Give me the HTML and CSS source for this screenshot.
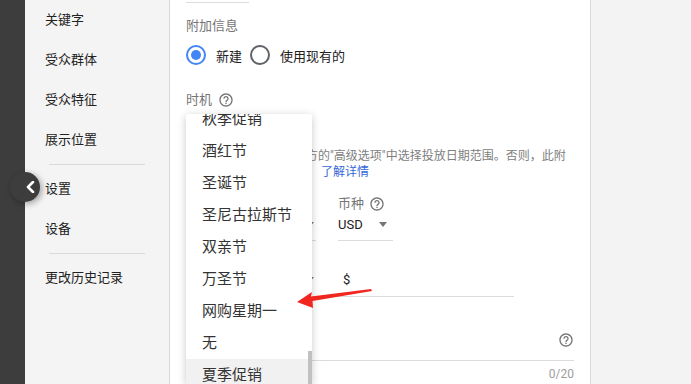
FILE: index.html
```html
<!DOCTYPE html>
<html lang="zh-CN">
<head>
    <meta charset="UTF-8">
    <meta name="viewport" content="width=device-width, initial-scale=1.0">
    <title>附加信息 - 设置</title>
    <link rel="stylesheet" href="styles.css">
</head>
<body>
    <div class="rail"></div>

    <nav class="side">
        <a class="side-item">关键字</a>
        <a class="side-item">受众群体</a>
        <a class="side-item">受众特征</a>
        <a class="side-item">展示位置</a>
        <div class="side-divider"></div>
        <a class="side-item">设置</a>
        <a class="side-item">设备</a>
        <div class="side-divider"></div>
        <a class="side-item">更改历史记录</a>
    </nav>

    <button class="collapse" title="收起">
        <svg width="10" height="12" viewBox="0 0 10 12"><polyline points="8,1 3,6 8,11" fill="none" stroke="#fff" stroke-width="2.6" stroke-linecap="round" stroke-linejoin="round"/></svg>
    </button>

    <main class="main">
        <div class="prev-field"></div>

        <div class="label">附加信息</div>
        <div class="radios">
            <label class="radio"><span class="radio-dot checked"></span>新建</label>
            <label class="radio"><span class="radio-dot"></span>使用现有的</label>
        </div>

        <div class="label timing">时机
            <svg class="help" viewBox="0 0 24 24"><path d="M11 18h2v-2h-2v2zm1-16C6.48 2 2 6.48 2 12s4.480 10 10 10 10-4.48 10-10S17.52 2 12 2zm0 18c-4.41 0-8-3.590-8-8s3.59-8 8-8 8 3.59 8 8-3.59 8-8 8zm0-14c-2.21 0-4 1.79-4 4h2c0-1.1.9-2 2-2s2 .9 2 2c0 2-3 1.75-3 5h2c0-2.25 3-2.5 3-5 0-2.21-1.79-4-4-4z"/></svg>
        </div>

        <p class="desc">请在此附加信息页面下方的"高级选项"中选择投放日期范围。否则，此附加信息会一直有效展示。 <a class="link">了解详情</a></p>

        <div class="row">
            <div class="field field-wide">
                <div class="field-label"></div>
                <div class="field-value"><span></span><span class="caret"></span></div>
            </div>
            <div class="field field-currency">
                <div class="field-label">币种
                    <svg class="help" viewBox="0 0 24 24"><path d="M11 18h2v-2h-2v2zm1-16C6.48 2 2 6.48 2 12s4.48 10 10 10 10-4.48 10-10S17.52 2 12 2zm0 18c-4.41 0-8-3.59-8-8s3.59-8 8-8 8 3.59 8 8-3.59 8-8 8zm0-14c-2.21 0-4 1.79-4 4h2c0-1.1.9-2 2-2s2 .9 2 2c0 2-3 1.75-3 5h2c0-2.25 3-2.5 3-5 0-2.21-1.79-4-4-4z"/></svg>
                </div>
                <div class="field-value"><span class="value">USD</span><span class="caret"></span></div>
            </div>
        </div>

        <div class="amount-row">
            <div class="amount-select"><span class="caret"></span></div>
            <span class="value dollar">$</span>
        </div>

        <div class="help-field">
            <svg class="help" viewBox="0 0 24 24"><path d="M11 18h2v-2h-2v2zm1-16C6.48 2 2 6.48 2 12s4.48 10 10 10 10-4.48 10-10S17.52 2 12 2zm0 18c-4.41 0-8-3.59-8-8s3.59-8 8-8 8 3.59 8 8-3.59 8-8 8zm0-14c-2.21 0-4 1.79-4 4h2c0-1.1.9-2 2-2s2 .9 2 2c0 2-3 1.75-3 5h2c0-2.25 3-2.5 3-5 0-2.21-1.79-4-4-4z"/></svg>
        </div>
        <div class="counter">0/20</div>

        <!-- open dropdown for 时机 -->
        <div class="menu">
            <ul class="menu-list">
                <li class="menu-item">秋季促销</li>
                <li class="menu-item">酒红节</li>
                <li class="menu-item">圣诞节</li>
                <li class="menu-item">圣尼古拉斯节</li>
                <li class="menu-item">双亲节</li>
                <li class="menu-item">万圣节</li>
                <li class="menu-item">网购星期一</li>
                <li class="menu-item">无</li>
                <li class="menu-item active">夏季促销</li>
            </ul>
            <div class="menu-scroll"></div>
        </div>

        <svg class="pointer" width="80" height="24" viewBox="0 0 80 24">
            <polygon points="2,16 17,6 16,10.5 76,3 77,5 17.5,15 18,22" fill="#f0261f"/>
        </svg>
    </main>

    <div class="gutter"></div>
</body>
</html>
```

FILE: styles.css
```css
body {
    margin: 0;
    display: flex;
    height: 384px;
    overflow: hidden;
    position: relative;
    font-family: Roboto, "Noto Sans CJK SC", sans-serif;
    color: #212121;
    background-color: #f3f3f3;
}
.rail {
    width: 25px;
    flex-shrink: 0;
    background-color: #3d3d3d;
}
.side {
    width: 144px;
    flex-shrink: 0;
    background-color: #f4f4f4;
    border-right: 1px solid #dadada;
}
.side-item {
    display: block;
    height: 40px;
    line-height: 40px;
    padding-left: 20px;
    font-size: 13px;
    color: #222;
}
.side-divider {
    width: 96px;
    height: 1px;
    margin: 4px 0 4px 24px;
    background-color: #dadada;
}
.collapse {
    position: absolute;
    left: 10px;
    top: 172px;
    width: 30px;
    height: 30px;
    padding: 0 5px 0 0;
    border: none;
    border-radius: 50%;
    background-color: #3d3d3d;
    box-shadow: 2px 2px 6px rgba(0, 0, 0, 0.35);
    display: flex;
    align-items: center;
    justify-content: flex-end;
    cursor: pointer;
}
.main {
    width: 404px;
    flex-shrink: 0;
    padding-left: 16px;
    background-color: #ffffff;
    border-right: 1px solid #dadada;
    position: relative;
}
.gutter {
    flex: 1;
    background-color: #f3f3f3;
}
.prev-field {
    width: 63px;
    height: 2px;
    border-bottom: 1px solid #dcdcdc;
}
.label {
    margin-top: 14px;
    font-size: 13px;
    line-height: 18px;
    color: #757575;
    display: flex;
    align-items: center;
    gap: 6px;
}
.timing {
    margin-top: 26px;
}
.help {
    width: 16px;
    height: 16px;
    fill: #757575;
    flex-shrink: 0;
}
.radios {
    margin-top: 10px;
    height: 20px;
    display: flex;
    align-items: center;
}
.radio {
    display: flex;
    align-items: center;
    margin-right: 8px;
    font-size: 13px;
    color: #212121;
}
.radio-dot {
    width: 20px;
    height: 20px;
    box-sizing: border-box;
    margin-right: 10px;
    border: 2px solid #5f6368;
    border-radius: 50%;
    display: flex;
    align-items: center;
    justify-content: center;
}
.radio-dot.checked {
    border-color: #4285f4;
}
.radio-dot.checked::after {
    content: "";
    width: 10px;
    height: 10px;
    border-radius: 50%;
    background-color: #4285f4;
}
.desc {
    width: 384px;
    margin: 39px 0 0;
    font-size: 12px;
    line-height: 16px;
    color: #808080;
}
.link {
    color: #3367d6;
}
.row {
    margin-top: 16px;
    display: flex;
    gap: 22px;
}
.field-label {
    height: 16px;
    font-size: 13px;
    line-height: 16px;
    color: #757575;
    display: flex;
    align-items: center;
    gap: 5px;
}
.field-value {
    height: 24px;
    padding-bottom: 4px;
    border-bottom: 1px solid #dcdcdc;
    display: flex;
    align-items: center;
    justify-content: space-between;
}
.field-wide {
    width: 130px;
}
.field-currency {
    width: 55px;
}
.value {
    font-size: 13px;
    color: #212121;
}
.caret {
    width: 0;
    height: 0;
    margin-right: 6px;
    border-left: 4.5px solid transparent;
    border-right: 4.5px solid transparent;
    border-top: 5px solid #757575;
}
.field-wide .caret,
.amount-select .caret {
    margin-right: 2px;
}
.amount-row {
    width: 328px;
    height: 24px;
    margin-top: 26px;
    padding-bottom: 5px;
    border-bottom: 1px solid #dcdcdc;
    display: flex;
    align-items: center;
}
.amount-select {
    width: 130px;
    display: flex;
    justify-content: flex-end;
}
.dollar {
    margin-left: 27px;
}
.help-field {
    width: 388px;
    height: 24px;
    margin-top: 31px;
    padding-bottom: 8px;
    border-bottom: 1px solid #dcdcdc;
    display: flex;
    align-items: center;
    justify-content: flex-end;
}
.counter {
    width: 388px;
    margin-top: 5px;
    font-size: 12px;
    line-height: 16px;
    color: #9e9e9e;
    text-align: right;
}
.menu {
    position: absolute;
    left: 16px;
    top: 114px;
    bottom: 0;
    width: 126px;
    overflow: hidden;
    background-color: #ffffff;
    border-radius: 2px 2px 0 0;
    box-shadow: 0 2px 8px rgba(0, 0, 0, 0.22);
}
.menu-list {
    list-style: none;
    margin: -11px 0 0;
    padding: 0;
}
.menu-item {
    height: 32px;
    line-height: 32px;
    padding-left: 16px;
    font-size: 15px;
    color: #333;
    white-space: nowrap;
}
.menu-item.active {
    background-color: #f1f1f1;
}
.menu-scroll {
    position: absolute;
    right: 0;
    top: 237px;
    bottom: 0;
    width: 4px;
    background-color: #c1c1c1;
}
.pointer {
    position: absolute;
    left: 125px;
    top: 286px;
}
```
